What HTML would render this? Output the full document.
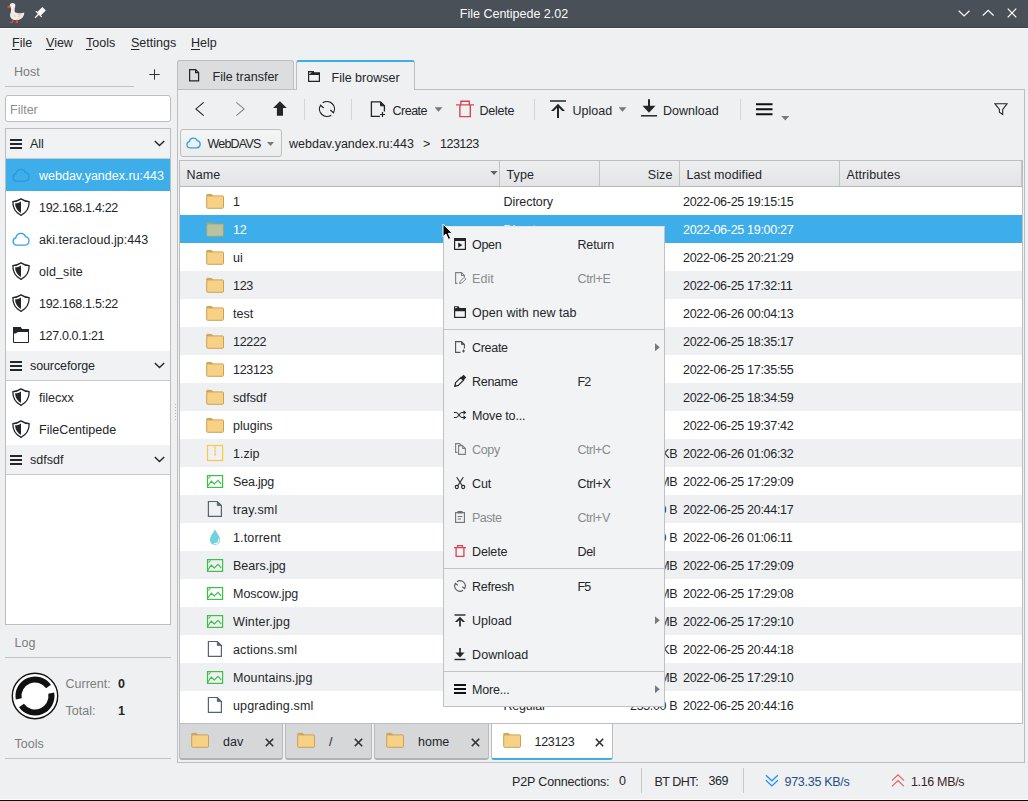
<!DOCTYPE html>
<html><head><meta charset="utf-8"><title>File Centipede 2.02</title>
<style>
*{box-sizing:border-box;margin:0;padding:0}
html,body{width:1028px;height:801px;overflow:hidden}
body{position:relative;background:#eff0f1;color:#232629;font-family:"Liberation Sans","DejaVu Sans",sans-serif;font-size:12.5px;line-height:16px;cursor:default}
div,span,i,svg.ic,u{position:absolute;display:block;white-space:nowrap}
u{position:static;display:inline;text-decoration:underline;text-underline-offset:2px}
.defs{position:absolute;width:0;height:0;overflow:hidden}
#titlebar{left:0;top:0;width:1028px;height:29px;background:#495058;border-bottom:1px solid #fbfcfc}
#titlebar::after{content:"";position:absolute;left:0;top:27px;width:1028px;height:1px;background:#3b454e}
#title{left:0;width:1028px;top:6px;text-align:center;color:#fcfcfc}
.mb{top:35px;height:17px}
.lbl{color:#7a7d80}
.hr{height:1px;background:#bfc1c2}
#filter{left:5px;top:95px;width:166px;height:27px;background:#fff;border:1px solid #bcbebf;border-radius:3px}
#filter span{left:4px;top:6px;color:#8b8e90}
#hostlist{left:5px;top:128px;width:166px;height:497px;background:#fff;border:1px solid #bcbebf;overflow:hidden}
.hh{left:0;width:164px;height:30px;background:#f1f2f3;border-bottom:1px solid #c9cacb}
.hh .hl{left:24px;top:7px}
.hi{left:0;width:164px;height:32px}
.hi .il{left:33px;top:9px}
.hi.sel{background:#3daee9;color:#fff}
.tab{height:30px;border:1px solid #bcbebf;border-bottom:none;border-radius:3px 3px 0 0}
#pane{left:177px;top:89px;width:848px;height:674px;border:1px solid #bcbebf;background:#eff0f1}
.tsep{top:99px;width:1px;height:21px;background:#d3d5d6}
.tbt{top:103px}
.dd{width:8px;height:4.5px;background:#77797c;clip-path:polygon(0 0,100% 0,50% 100%)}
#combo{left:180px;top:129px;width:102px;height:28px;border:1px solid #bcbebf;border-radius:3px;background:linear-gradient(#f4f5f5,#ebecec)}
#table{left:179px;top:160px;width:844px;height:564px;background:#fff;border:1px solid #bcbebf;overflow:hidden}
#thead{left:0;top:0;width:842px;height:26px;background:linear-gradient(#edeeef,#e3e4e5);border-bottom:1px solid #b7b8b8}
.th{top:0;height:25px;letter-spacing:.1px;padding:6px 6.5px 0 6.5px;border-right:1px solid #c2c4c5}
.th.r{text-align:right}
.sortarrow{left:310px;top:9.5px;width:8px;height:4.5px;background:#5f6265;clip-path:polygon(0 0,100% 0,50% 100%)}
.tr{left:0;width:842px;height:28px;background:#fff}
.tr.alt{background:#eff0f1}
.tr.sel{background:#3daee9;color:#fff}
.c{top:7px}
.c.n{left:53px}
.c.t{left:323.5px;letter-spacing:-.05px}
.c.s{left:420px;width:77.300px;text-align:right;letter-spacing:-.35px}
.c.d{left:503px;letter-spacing:-0.3px}
.btab{top:724px;height:36px;border:1px solid #b9bbbd;border-top:none;border-bottom:2px solid #b0b2b4;border-radius:0 0 3px 3px;background:#d6d7d9}
.btab span{top:9.5px}
.btab.act{background:#fff;border-bottom:2px solid #3daee9}
.x{width:9px;height:9px}
#status span{top:773.5px}
.ssep{top:768px;width:1px;height:25px;background:#c6c8c9}
#bottomline{left:0;top:800px;width:1028px;height:1px;background:#0c0c0c}
#whiteline{left:0;top:799px;width:1028px;height:1px;background:#fdfdfd}
#splitter{left:175px;top:404px;width:1px;height:16px;background:repeating-linear-gradient(#aeb0b2 0 1px,transparent 1px 3px)}
#menu{left:443px;top:226px;width:222px;height:481px;background:#f2f3f4;border:1px solid #bfc1c3;border-top-color:#e4e5e6;box-shadow:none}
.mi{left:0;width:220px;height:34px}
.mi .ml{left:28px;top:10px}
.mi .ms{left:133.5px;top:10px}
.mi.dis{color:#888b8e}
.marr{left:211px;top:13.300px;width:4.800px;height:8px;background:#77797c;clip-path:polygon(0 0,100% 50%,0 100%)}
.msep{left:0;width:220px;height:1px;background:#c3c5c6}
#cursor{position:absolute;left:441.5px;top:223px}

</style></head>
<body>

<svg class="defs">
<defs>
<symbol id="i-burger" viewBox="0 0 12 10"><path d="M0 1h12M0 5h12M0 9h12" stroke="#232629" stroke-width="2" fill="none"/></symbol>
<symbol id="i-chev" viewBox="0 0 11 7"><path d="M0.800 0.900L5.500 5.500L10.200 0.900" stroke="#232629" stroke-width="1.400" fill="none"/></symbol>
<symbol id="i-cloud" viewBox="0 0 18 18"><path d="M4.6 15.2A3.8 3.8 0 0 1 3.9 7.75A5 5 0 0 1 13.5 6.6A4.35 4.35 0 0 1 13.1 15.2Z" stroke="#2fa1e8" stroke-width="1.3" fill="none"/></symbol>
<symbol id="i-cloud-sel" viewBox="0 0 18 18"><path d="M4.6 15.2A3.8 3.8 0 0 1 3.9 7.75A5 5 0 0 1 13.5 6.6A4.35 4.35 0 0 1 13.1 15.2Z" stroke="#2b97e0" stroke-width="1.3" fill="none"/></symbol>
<symbol id="i-shield" viewBox="0 0 18 18"><path d="M9 0.900C11.500 2.700 14.400 3.500 17.200 3.600C17.200 10 14.500 14.800 9 17.300C3.500 14.800 0.800 10 0.800 3.600C3.600 3.500 6.500 2.700 9 0.900Z" fill="#fff" stroke="#232629" stroke-width="1.300" stroke-linejoin="round"/><path d="M9 3.400V15C5.400 12.800 3.300 9.600 3 5.500C5.200 5.300 7.300 4.500 9 3.400Z" fill="#232629"/></symbol>
<symbol id="i-ftp" viewBox="0 0 18 18"><path d="M1.500 1.500h7l1 2h7v13h-15z" stroke="#232629" stroke-width="1" fill="#fff"/><path d="M1 1h7.800l1 2H17v3H6.500c-1.500 0-2 1.500-3.500 1.500H1z" fill="#232629"/></symbol>
<symbol id="i-folder" viewBox="0 0 20 18"><path d="M1.700 4V3Q1.700 2.400 2.300 2.400H6.600L7.600 4Z" fill="#e8b75e" stroke="#caa258" stroke-width="1" stroke-linejoin="round"/><rect x="1.700" y="3.900" width="16.800" height="12.400" rx="1" fill="#f6d186" stroke="#caa258" stroke-width="1"/></symbol>
<symbol id="i-folder-sel" viewBox="0 0 20 18"><path d="M1.700 4V3Q1.700 2.400 2.300 2.400H6.600L7.600 4Z" fill="#a7b48e" stroke="#8fa585" stroke-width="1" stroke-linejoin="round"/><rect x="1.700" y="3.900" width="16.800" height="12.400" rx="1" fill="#bac3a0" stroke="#8fa585" stroke-width="1"/></symbol>
<symbol id="i-zip" viewBox="0 0 20 18"><rect x="2.500" y="1.500" width="15.100" height="15" fill="none" stroke="#f8ca45" stroke-width="1.200"/><path d="M10 1.500l.8.700-1.600 1.200 1.600 1.200-1.600 1.200 1.600 1.200-1.600 1.200 1.600 1.200-.8.700" fill="none" stroke="#f8ca45" stroke-width="1"/><rect x="9.200" y="10" width="1.600" height="1.600" fill="#f8ca45"/></symbol>
<symbol id="i-img" viewBox="0 0 20 18"><rect x="2.500" y="3.600" width="15.100" height="11.800" fill="none" stroke="#3cc04a" stroke-width="1.200"/><path d="M2.800 14l3.500-4.800 3 2.800 3.700-3.600 3.200 3.400" fill="none" stroke="#3cc04a" stroke-width="1.200"/><path d="M5.300 3.800a2.600 2.600 0 0 1-2.600 2.600" fill="none" stroke="#3cc04a" stroke-width="1"/></symbol>
<symbol id="i-doc" viewBox="0 0 20 18"><path d="M3.400 1.500H12.300L16.400 5.600V16.400H3.400Z" fill="none" stroke="#566375" stroke-width="1.200"/><path d="M12.300 1.500V5.600H16.400Z" fill="#566375" stroke="#566375" stroke-width=".8"/></symbol>
<symbol id="i-drop" viewBox="0 0 20 18"><path d="M10 1.300C12 5.500 15.100 8.500 15.100 12A5.100 5.100 0 0 1 4.900 12C4.900 8.500 8 5.500 10 1.300Z" fill="#6fd3dc"/><path d="M13.700 10.800a3.700 3.700 0 0 1-4.700 4.600" stroke="#fff" stroke-width="1.100" fill="none"/></symbol>
<symbol id="i-docs" viewBox="0 0 16 16"><path d="M3.600 3.600h6l3 3v8.300h-9z" fill="none" stroke="#232629" stroke-width="1.200"/><path d="M9.600 3.600v3h3" fill="none" stroke="#232629" stroke-width="1.200"/></symbol>
<symbol id="i-tabico" viewBox="0 0 16 16"><path d="M3.600 4.600h4.500l1 1.500h5.300v8.300h-10.800z" fill="none" stroke="#232629" stroke-width="1.200"/><path d="M3 4h5.400l1 1.500H15v2.500H3z" fill="#232629"/><path d="M4.200 7.200l2.800-1.800h-2.800z" fill="#fff"/></symbol>
<symbol id="m-open" viewBox="0 0 16 16"><rect x="2.600" y="2.600" width="10.800" height="10.800" fill="none" stroke="#232629" stroke-width="1.200"/><path d="M2 2h12v3h-12z" fill="#232629"/><path d="M6.200 6.400l4.200 2.700-4.200 2.700z" fill="#232629"/></symbol>
<symbol id="m-edit" viewBox="0 0 16 16"><path d="M9.500 2.600L12.400 5.500V7" fill="none" stroke="#7d8083" stroke-width="1.100"/><path d="M5.500 13.400H3.600V2.600H9.500V5.500H12.400" fill="none" stroke="#7d8083" stroke-width="1.100"/><path d="M7.600 13.600l.6-2.300 4-4 1.700 1.700-4 4z" fill="none" stroke="#7d8083" stroke-width="1"/></symbol>
<symbol id="m-tab" viewBox="0 0 16 16"><rect x="2.600" y="4.600" width="10.800" height="8.800" fill="none" stroke="#232629" stroke-width="1.200"/><path d="M2 2.200h4.500l1.500 2.300h6v2.700h-12z" fill="#232629"/><path d="M3.200 4.400l2.600-1.400h-2.600z" fill="#f2f3f4"/></symbol>
<symbol id="m-create" viewBox="0 0 16 16"><path d="M8.500 13.400H3.600V2.600H9.500L12.400 5.500V9.500" fill="none" stroke="#4d5258" stroke-width="1.100"/><path d="M9.500 2.600V5.500H12.400Z" fill="#4d5258" stroke="#4d5258" stroke-width=".8"/><path d="M11.500 10.500v3M10 12h3" stroke="#4d5258" stroke-width="1"/></symbol>
<symbol id="m-rename" viewBox="0 0 16 16"><path d="M2.700 13.300l.9-3.600 5.400-5.400 2.700 2.700-5.400 5.400z" fill="none" stroke="#232629" stroke-width="1.200" stroke-linejoin="round"/><path d="M8.300 5l3.300-3.300 2.700 2.700-3.300 3.300z" fill="#232629"/><path d="M2.700 13.300l.5-2 1.500 1.500z" fill="#232629"/></symbol>
<symbol id="m-move" viewBox="0 0 16 16"><path d="M2 5.500h2.200c2.200 0 3.400 5 5.600 5h3M2 10.500h2.200c2.200 0 3.400-5 5.600-5h3" fill="none" stroke="#232629" stroke-width="1.100"/><path d="M11.500 3.200l2.800 2.300-2.800 2.300zM11.500 8.200l2.800 2.300-2.800 2.300z" fill="#232629"/></symbol>
<symbol id="m-copy" viewBox="0 0 16 16"><path d="M5.500 11.400H3.600V2.600H7.500L9.400 4.500" fill="none" stroke="#7d8083" stroke-width="1.100"/><path d="M6.600 4.600H10.500L13.400 7.500V13.400H6.600Z" fill="none" stroke="#7d8083" stroke-width="1.100"/><path d="M10.500 4.600V7.500H13.400" fill="none" stroke="#7d8083" stroke-width="1"/></symbol>
<symbol id="m-cut" viewBox="0 0 16 16"><path d="M4.700 2.200l5.600 8.600M11.300 2.200l-5.600 8.600" stroke="#232629" stroke-width="1.100"/><circle cx="4.800" cy="12" r="1.600" fill="none" stroke="#232629" stroke-width="1.100"/><circle cx="11.200" cy="12" r="1.600" fill="none" stroke="#232629" stroke-width="1.100"/></symbol>
<symbol id="m-paste" viewBox="0 0 16 16"><rect x="3.600" y="3.600" width="8.800" height="9.800" fill="none" stroke="#6c7073" stroke-width="1.100"/><rect x="5.500" y="2" width="5" height="2.500" fill="#6c7073"/><path d="M5.700 7.500h4.600M5.700 10h3.300" stroke="#6c7073" stroke-width="1"/></symbol>
<symbol id="m-delete" viewBox="0 0 16 16"><path d="M2 4.600h12M5.600 4.600V2.600h4.800V4.600M4.100 4.600v8.700h7.800V4.600" fill="none" stroke="#da4453" stroke-width="1.300"/></symbol>
<symbol id="m-refresh" viewBox="0 0 16 16"><path d="M4.960 3.660A5.300 5.300 0 0 1 12.590 10.650L10.300 8.700" fill="none" stroke="#575b5f" stroke-width="1.150"/><path d="M11.040 12.340A5.300 5.300 0 0 1 3.410 5.350L5.700 7.300" fill="none" stroke="#575b5f" stroke-width="1.150"/></symbol>
<symbol id="m-upload" viewBox="0 0 16 16"><path d="M2.500 3h11" stroke="#232629" stroke-width="1.400"/><path d="M8 14.500v-8" stroke="#232629" stroke-width="1.700"/><path d="M8 4.800l5 5.200h-2.300l-2.700-2.700-2.700 2.700h-2.300z" fill="#232629"/></symbol>
<symbol id="m-download" viewBox="0 0 16 16"><path d="M2.500 13.500h11" stroke="#232629" stroke-width="1.400"/><path d="M8 2v6" stroke="#232629" stroke-width="1.700"/><path d="M3.500 6.500h9l-4.500 5z" fill="#232629"/></symbol>
<symbol id="m-more" viewBox="0 0 16 16"><path d="M2 4h12M2 8h12M2 12h12" stroke="#111" stroke-width="2" fill="none"/></symbol>
<symbol id="i-x" viewBox="0 0 9 9"><path d="M.8.800l7.400 7.400M8.200.800l-7.400 7.400" stroke="#2e3236" stroke-width="1.600"/></symbol>
</defs>
</svg>

<div id="titlebar">
<svg class="ic" style="left:0;top:0" width="50" height="27" viewBox="0 0 50 27"><path d="M10.900 6C10.900 9 11.600 11 10.300 13.500C9.300 17 11.500 20.200 16.500 20.200C21.200 20.200 24.300 17 24.300 12.600C21.500 13.700 17.500 13.300 15 12.200C14.200 10.500 14.900 8 14.900 6Z" fill="#f1ebe6"/><circle cx="12.600" cy="5.600" r="2.700" fill="#f5f0eb"/><path d="M10.200 5.200L7.400 6.200Q7.200 7.700 8.600 7.800L10.600 7.400Z" fill="#e8552d"/><path d="M13.200 19.800L12.300 22.400H10.400M17.200 19.800L17.500 22.400H15.600" fill="none" stroke="#e8552d" stroke-width="1.200"/><path d="M14 15.500l1.500 1M17.500 14.500l2.500.5M18 17l2-1M20.500 14l1.500 1.500" stroke="#c7b9b0" stroke-width=".8"/><g transform="translate(38.800,14) rotate(45)" fill="#fcfcfc" stroke="#fcfcfc"><rect x="-2.400" y="-7.500" width="4.800" height="7.500" stroke="none"/><path d="M-4.100 0H4.100" stroke-width="1.300"/><path d="M0 0V5.200" stroke-width="1.300"/></g></svg>
<span id="title">File Centipede 2.02</span>
<svg class="ic" style="left:956px;top:6px" width="64" height="14" viewBox="0 0 64 14"><path d="M2.700 4.700l5.400 5.200 5.400-5.200M26.800 9.500l5.400-5.200 5.400 5.200M51.700 2.600l8.600 8.800M60.300 2.600l-8.600 8.800" stroke="#fcfcfc" stroke-width="1.200" fill="none"/></svg>
</div>
<span class="mb" style="left:12px"><u>F</u>ile</span>
<span class="mb" style="left:46px"><u>V</u>iew</span>
<span class="mb" style="left:86px"><u>T</u>ools</span>
<span class="mb" style="left:131px"><u>S</u>ettings</span>
<span class="mb" style="left:191px"><u>H</u>elp</span>

<span class="lbl" style="left:14px;top:64px">Host</span>
<svg class="ic" style="left:149px;top:69px" width="11" height="11" viewBox="0 0 11 11"><path d="M5.500 0.300v10.400M0.300 5.500h10.400" stroke="#2f3337" stroke-width="1"/></svg>
<div class="hr" style="left:5px;top:86px;width:129px"></div>
<div id="filter"><span>Filter</span></div>

<div class="tab" style="left:177px;top:60px;width:117px;background:#dcddde"><svg class="ic" style="left:8px;top:5px" width="16" height="16"><use href="#i-docs"/></svg><span style="left:34.5px;top:7.5px">File transfer</span></div>
<div id="pane"></div>
<div class="tab" style="left:296px;top:60px;width:119px;height:30px;background:#eff0f1;border-top:2px solid #3daee9"><svg class="ic" style="left:8px;top:5px" width="16" height="16"><use href="#i-tabico"/></svg><span style="left:34.5px;top:7.5px">File browser</span></div>

<svg class="ic" style="left:194px;top:101px" width="12" height="16" viewBox="0 0 12 16"><path d="M9.700 1.400l-7.800 6.500 7.800 6.700" stroke="#232629" stroke-width="1.100" fill="none"/></svg>
<svg class="ic" style="left:234px;top:101px" width="12" height="16" viewBox="0 0 12 16"><path d="M2.300 1.400l7.800 6.500-7.800 6.700" stroke="#85888a" stroke-width="1.100" fill="none"/></svg>
<svg class="ic" style="left:272px;top:101px" width="16" height="15" viewBox="0 0 16 15"><path d="M7.900 0.200l6.900 6.800h-3.800v7.800h-6.100v-7.800h-3.800z" fill="#232629"/></svg>
<div class="tsep" style="left:304px"></div>
<svg class="ic" style="left:318px;top:100px" width="18" height="18" viewBox="0 0 18 18"><path d="M4.700 2.860A7.500 7.500 0 0 1 15.500 12.750L12.300 10" fill="none" stroke="#232629" stroke-width="1.200"/><path d="M13.300 15.140A7.500 7.500 0 0 1 2.500 5.250L5.700 8" fill="none" stroke="#232629" stroke-width="1.200"/></svg>
<div class="tsep" style="left:351px"></div>
<svg class="ic" style="left:370px;top:100px" width="16" height="18" viewBox="0 0 16 18"><path d="M10 16.300H1.400V1.900H10.500L14.400 5.800V11.500" fill="none" stroke="#232629" stroke-width="1.300"/><path d="M10.500 1.900L14.400 5.800H10.500Z" fill="#232629" stroke="#232629" stroke-width="1"/><path d="M12.500 12v5M10 14.500h5" stroke="#232629" stroke-width="1.200"/></svg>
<span class="tbt" style="left:392.500px;letter-spacing:-0.500px">Create</span>
<i class="dd" style="left:434.500px;top:107.300px"></i>
<svg class="ic" style="left:456px;top:100px" width="18" height="18" viewBox="0 0 18 18"><path d="M0 4.900H18M4.900 4.900V1.300H13.300V4.900M3.900 4.900V16.600H14.300V4.900" fill="none" stroke="#da4453" stroke-width="1.400"/></svg>
<span class="tbt" style="left:479.500px;letter-spacing:-0.250px">Delete</span>
<div class="tsep" style="left:534px"></div>
<svg class="ic" style="left:550px;top:100px" width="16" height="18" viewBox="0 0 16 18"><path d="M0 1h16" stroke="#232629" stroke-width="1.500"/><path d="M8 18v-12" stroke="#232629" stroke-width="2"/><path d="M8 3.700l7 7.200h-2.800l-4.200-4.200-4.200 4.200h-2.800z" fill="#232629"/></svg>
<span class="tbt" style="left:572.500px">Upload</span>
<i class="dd" style="left:618.500px;top:107.300px"></i>
<svg class="ic" style="left:641px;top:99px" width="16" height="18" viewBox="0 0 16 18"><path d="M0 16.800h16" stroke="#232629" stroke-width="1.500"/><path d="M8 0.300v8" stroke="#232629" stroke-width="2"/><path d="M1.500 6.700h13l-6.500 7z" fill="#232629"/></svg>
<span class="tbt" style="left:663px">Download</span>
<div class="tsep" style="left:740px"></div>
<svg class="ic" style="left:756px;top:103px" width="17" height="13" viewBox="0 0 17 13"><path d="M0 1.200h16.500M0 6.200h16.500M0 11.200h16.500" stroke="#111" stroke-width="2"/></svg>
<i class="dd" style="left:781.300px;top:116px"></i>
<svg class="ic" style="left:994px;top:103px" width="14" height="13" viewBox="0 0 14 13"><path d="M1 0.800h12l-4.300 5.700v5l-3.300-2.200v-2.800z" fill="none" stroke="#232629" stroke-width="1.100"/></svg>

<div id="combo"><svg class="ic" style="left:5px;top:6px" width="15" height="13" viewBox="0 0 18 15.6"><path d="M4.600 14.200A3.800 3.800 0 0 1 3.900 6.750A5 5 0 0 1 13.500 5.600A4.350 4.350 0 0 1 13.100 14.200Z" stroke="#2fa1e8" stroke-width="1.500" fill="none"/></svg><span style="left:26.500px;top:6px;letter-spacing:-0.800px">WebDAVS</span><i class="dd" style="left:85.500px;top:11.500px"></i></div>
<span style="left:289px;top:136px">webdav.yandex.ru:443</span>
<span style="left:423px;top:136px">&gt;</span>
<span style="left:440px;top:136px;letter-spacing:-0.500px">123123</span>

<div id="hostlist">
<div class="hh" style="top:0px"><svg class="ic" style="left:4px;top:10px" width="12" height="10" ><use href="#i-burger"/></svg><span class="hl">All</span><svg class="ic" style="left:147.9px;top:10.8px" width="11" height="7" ><use href="#i-chev"/></svg></div>
<div class="hi sel" style="top:30px"><svg class="ic" style="left:6px;top:7px" width="18" height="18" ><use href="#i-cloud-sel"/></svg><span class="il">webdav.yandex.ru:443</span></div>
<div class="hi" style="top:62px"><svg class="ic" style="left:6px;top:7px" width="18" height="18" ><use href="#i-shield"/></svg><span class="il" style="letter-spacing:-0.32px">192.168.1.4:22</span></div>
<div class="hi" style="top:94px"><svg class="ic" style="left:6px;top:7px" width="18" height="18" ><use href="#i-cloud"/></svg><span class="il" style="letter-spacing:0.04px">aki.teracloud.jp:443</span></div>
<div class="hi" style="top:126px"><svg class="ic" style="left:6px;top:7px" width="18" height="18" ><use href="#i-shield"/></svg><span class="il" style="letter-spacing:0.1px">old_site</span></div>
<div class="hi" style="top:158px"><svg class="ic" style="left:6px;top:7px" width="18" height="18" ><use href="#i-shield"/></svg><span class="il" style="letter-spacing:-0.32px">192.168.1.5:22</span></div>
<div class="hi" style="top:190px"><svg class="ic" style="left:6px;top:7px" width="18" height="18" ><use href="#i-ftp"/></svg><span class="il" style="letter-spacing:-0.36px">127.0.0.1:21</span></div>
<div class="hh" style="top:222px"><svg class="ic" style="left:4px;top:10px" width="12" height="10" ><use href="#i-burger"/></svg><span class="hl" style="letter-spacing:-0.1px">sourceforge</span><svg class="ic" style="left:147.9px;top:10.8px" width="11" height="7" ><use href="#i-chev"/></svg></div>
<div class="hi" style="top:252px"><svg class="ic" style="left:6px;top:7px" width="18" height="18" ><use href="#i-shield"/></svg><span class="il">filecxx</span></div>
<div class="hi" style="top:284px"><svg class="ic" style="left:6px;top:7px" width="18" height="18" ><use href="#i-shield"/></svg><span class="il">FileCentipede</span></div>
<div class="hh" style="top:316px"><svg class="ic" style="left:4px;top:10px" width="12" height="10" ><use href="#i-burger"/></svg><span class="hl">sdfsdf</span><svg class="ic" style="left:147.9px;top:10.8px" width="11" height="7" ><use href="#i-chev"/></svg></div>
</div>

<div id="table">
<div id="thead"><span class="th" style="left:0;width:320px">Name</span><span class="th" style="left:320px;width:100px">Type</span><span class="th r" style="left:420px;width:80px">Size</span><span class="th" style="left:500px;width:160px">Last modified</span><span class="th" style="left:660px;width:182px">Attributes</span><i class="sortarrow"></i></div>
<div class="tr" style="top:26px"><svg class="ic" style="left:25px;top:5px" width="20" height="18" ><use href="#i-folder"/></svg><span class="c n" style="letter-spacing:-.3px">1</span><span class="c t">Directory</span><span class="c s"></span><span class="c d">2022-06-25 19:15:15</span></div>
<div class="tr alt sel" style="top:54px"><svg class="ic" style="left:25px;top:5px" width="20" height="18" ><use href="#i-folder-sel"/></svg><span class="c n" style="letter-spacing:-.3px">12</span><span class="c t">Directory</span><span class="c s"></span><span class="c d">2022-06-25 19:00:27</span></div>
<div class="tr" style="top:82px"><svg class="ic" style="left:25px;top:5px" width="20" height="18" ><use href="#i-folder"/></svg><span class="c n">ui</span><span class="c t">Directory</span><span class="c s"></span><span class="c d">2022-06-25 20:21:29</span></div>
<div class="tr alt" style="top:110px"><svg class="ic" style="left:25px;top:5px" width="20" height="18" ><use href="#i-folder"/></svg><span class="c n" style="letter-spacing:-.3px">123</span><span class="c t">Directory</span><span class="c s"></span><span class="c d">2022-06-25 17:32:11</span></div>
<div class="tr" style="top:138px"><svg class="ic" style="left:25px;top:5px" width="20" height="18" ><use href="#i-folder"/></svg><span class="c n">test</span><span class="c t">Directory</span><span class="c s"></span><span class="c d">2022-06-26 00:04:13</span></div>
<div class="tr alt" style="top:166px"><svg class="ic" style="left:25px;top:5px" width="20" height="18" ><use href="#i-folder"/></svg><span class="c n" style="letter-spacing:-.3px">12222</span><span class="c t">Directory</span><span class="c s"></span><span class="c d">2022-06-25 18:35:17</span></div>
<div class="tr" style="top:194px"><svg class="ic" style="left:25px;top:5px" width="20" height="18" ><use href="#i-folder"/></svg><span class="c n" style="letter-spacing:-.3px">123123</span><span class="c t">Directory</span><span class="c s"></span><span class="c d">2022-06-25 17:35:55</span></div>
<div class="tr alt" style="top:222px"><svg class="ic" style="left:25px;top:5px" width="20" height="18" ><use href="#i-folder"/></svg><span class="c n">sdfsdf</span><span class="c t">Directory</span><span class="c s"></span><span class="c d">2022-06-25 18:34:59</span></div>
<div class="tr" style="top:250px"><svg class="ic" style="left:25px;top:5px" width="20" height="18" ><use href="#i-folder"/></svg><span class="c n">plugins</span><span class="c t">Directory</span><span class="c s"></span><span class="c d">2022-06-25 19:37:42</span></div>
<div class="tr alt" style="top:278px"><svg class="ic" style="left:25px;top:5px" width="20" height="18" ><use href="#i-zip"/></svg><span class="c n">1.zip</span><span class="c t" style="letter-spacing:-0.2px">Regular</span><span class="c s">19.21 KB</span><span class="c d">2022-06-26 01:06:32</span></div>
<div class="tr" style="top:306px"><svg class="ic" style="left:25px;top:5px" width="20" height="18" ><use href="#i-img"/></svg><span class="c n" style="letter-spacing:-0.2px">Sea.jpg</span><span class="c t" style="letter-spacing:-0.2px">Regular</span><span class="c s">1.21 MB</span><span class="c d">2022-06-25 17:29:09</span></div>
<div class="tr alt" style="top:334px"><svg class="ic" style="left:25px;top:5px" width="20" height="18" ><use href="#i-doc"/></svg><span class="c n" style="letter-spacing:0.2px">tray.sml</span><span class="c t" style="letter-spacing:-0.2px">Regular</span><span class="c s">780 B</span><span class="c d">2022-06-25 20:44:17</span></div>
<div class="tr" style="top:362px"><svg class="ic" style="left:25px;top:5px" width="20" height="18" ><use href="#i-drop"/></svg><span class="c n" style="letter-spacing:0.15px">1.torrent</span><span class="c t" style="letter-spacing:-0.2px">Regular</span><span class="c s">400 B</span><span class="c d">2022-06-26 01:06:11</span></div>
<div class="tr alt" style="top:390px"><svg class="ic" style="left:25px;top:5px" width="20" height="18" ><use href="#i-img"/></svg><span class="c n">Bears.jpg</span><span class="c t" style="letter-spacing:-0.2px">Regular</span><span class="c s">1.71 MB</span><span class="c d">2022-06-25 17:29:09</span></div>
<div class="tr" style="top:418px"><svg class="ic" style="left:25px;top:5px" width="20" height="18" ><use href="#i-img"/></svg><span class="c n">Moscow.jpg</span><span class="c t" style="letter-spacing:-0.2px">Regular</span><span class="c s">1.38 MB</span><span class="c d">2022-06-25 17:29:08</span></div>
<div class="tr alt" style="top:446px"><svg class="ic" style="left:25px;top:5px" width="20" height="18" ><use href="#i-img"/></svg><span class="c n" style="letter-spacing:0.14px">Winter.jpg</span><span class="c t" style="letter-spacing:-0.2px">Regular</span><span class="c s">2.07 MB</span><span class="c d">2022-06-25 17:29:10</span></div>
<div class="tr" style="top:474px"><svg class="ic" style="left:25px;top:5px" width="20" height="18" ><use href="#i-doc"/></svg><span class="c n" style="letter-spacing:0.14px">actions.sml</span><span class="c t" style="letter-spacing:-0.2px">Regular</span><span class="c s">8.43 KB</span><span class="c d">2022-06-25 20:44:18</span></div>
<div class="tr alt" style="top:502px"><svg class="ic" style="left:25px;top:5px" width="20" height="18" ><use href="#i-img"/></svg><span class="c n" style="letter-spacing:0.13px">Mountains.jpg</span><span class="c t" style="letter-spacing:-0.2px">Regular</span><span class="c s">1.62 MB</span><span class="c d">2022-06-25 17:29:10</span></div>
<div class="tr" style="top:530px"><svg class="ic" style="left:25px;top:5px" width="20" height="18" ><use href="#i-doc"/></svg><span class="c n" style="letter-spacing:0.15px">upgrading.sml</span><span class="c t" style="letter-spacing:-0.2px">Regular</span><span class="c s">255.00 B</span><span class="c d">2022-06-25 20:44:16</span></div>
</div>

<span class="lbl" style="left:14.500px;top:635px">Log</span>
<div class="hr" style="left:5px;top:657px;width:166px"></div>
<svg class="ic" style="left:11px;top:672px" width="48" height="48" viewBox="0 0 48 48"><circle cx="24" cy="24" r="22.700" fill="#fff" stroke="#111" stroke-width="1.400"/><path d="M7.750 26.870A16.500 16.500 0 0 1 37.520 14.540" fill="none" stroke="#111" stroke-width="6"/><path d="M40.250 21.130A16.500 16.500 0 0 1 10.480 33.460" fill="none" stroke="#111" stroke-width="6"/></svg>
<span class="lbl" style="left:65.500px;top:676px">Current:</span><span style="left:118px;top:676px;font-weight:bold">0</span>
<span class="lbl" style="left:65.500px;top:703px">Total:</span><span style="left:118px;top:703px;font-weight:bold">1</span>
<span class="lbl" style="left:14.500px;top:736px">Tools</span>
<div class="hr" style="left:5px;top:758px;width:166px"></div>
<div id="splitter"></div>

<div class="btab" style="left:179px;width:104px"><svg class="ic" style="left:10px;top:7px" width="20" height="18"><use href="#i-folder"/></svg><span style="left:43px">dav</span><svg class="ic x" style="left:85px;top:13.500px"><use href="#i-x"/></svg></div>
<div class="btab" style="left:285px;width:87px"><svg class="ic" style="left:10px;top:7px" width="20" height="18"><use href="#i-folder"/></svg><span style="left:43px">/</span><svg class="ic x" style="left:68px;top:13.500px"><use href="#i-x"/></svg></div>
<div class="btab" style="left:374px;width:115px"><svg class="ic" style="left:10px;top:7px" width="20" height="18"><use href="#i-folder"/></svg><span style="left:43px">home</span><svg class="ic x" style="left:96px;top:13.500px"><use href="#i-x"/></svg></div>
<div class="btab act" style="left:491px;width:122px"><svg class="ic" style="left:10px;top:7px" width="20" height="18"><use href="#i-folder"/></svg><span style="left:42.500px;letter-spacing:-0.300px">123123</span><svg class="ic x" style="left:103px;top:13.500px"><use href="#i-x"/></svg></div>

<div id="status">
<span style="left:512px;letter-spacing:-0.150px">P2P Connections:</span><span style="left:619px;top:772.500px">0</span>
<div class="ssep" style="left:641px"></div>
<span style="left:654.500px;letter-spacing:-0.480px">BT DHT:</span><span style="left:708.500px;top:772.500px;letter-spacing:-0.500px">369</span>
<div class="ssep" style="left:743px"></div>
<svg class="ic" style="left:765px;top:774px" width="14" height="13" viewBox="0 0 14 13"><path d="M.9 1.200l6 5.600 6-5.600M.9 6.300l6 5.600 6-5.600" fill="none" stroke="#1e90ff" stroke-width="1.300"/></svg>
<span style="left:784.500px;color:#1f4e8c;letter-spacing:-0.280px">973.35 KB/s</span>
<svg class="ic" style="left:891px;top:773.500px" width="14" height="13" viewBox="0 0 14 13"><path d="M1 6.600l6-5.800 6 5.800M1 12.300l6-5.800 6 5.800" fill="none" stroke="#e85a5f" stroke-width="1.100"/></svg>
<span style="left:911px;color:#3d2328;letter-spacing:-0.340px">1.16 MB/s</span>
</div>
<div id="whiteline"></div>
<div id="bottomline"></div>

<div id="menu">
<div class="mi" style="top:0px"><svg class="ic" style="left:8px;top:9px" width="16" height="16" ><use href="#m-open"/></svg><span class="ml" style="letter-spacing:-0.295px">Open</span><span class="ms" style="letter-spacing:-0.17px">Return</span></div>
<div class="mi dis" style="top:34px"><svg class="ic" style="left:8px;top:9px" width="16" height="16" ><use href="#m-edit"/></svg><span class="ml" style="letter-spacing:0.08px">Edit</span><span class="ms" style="letter-spacing:-0.37px">Ctrl+E</span></div>
<div class="mi" style="top:68px"><svg class="ic" style="left:8px;top:9px" width="16" height="16" ><use href="#m-tab"/></svg><span class="ml" style="letter-spacing:0.065px">Open with new tab</span></div>
<div class="msep" style="top:102px"></div>
<div class="mi" style="top:103px"><svg class="ic" style="left:8px;top:9px" width="16" height="16" ><use href="#m-create"/></svg><span class="ml" style="letter-spacing:-0.3px">Create</span><i class="marr"></i></div>
<div class="mi" style="top:137px"><svg class="ic" style="left:8px;top:9px" width="16" height="16" ><use href="#m-rename"/></svg><span class="ml" style="letter-spacing:-0.27px">Rename</span><span class="ms" style="letter-spacing:-0.8px">F2</span></div>
<div class="mi" style="top:171px"><svg class="ic" style="left:8px;top:9px" width="16" height="16" ><use href="#m-move"/></svg><span class="ml" style="letter-spacing:-0.15px">Move to...</span></div>
<div class="mi dis" style="top:205px"><svg class="ic" style="left:8px;top:9px" width="16" height="16" ><use href="#m-copy"/></svg><span class="ml" style="letter-spacing:-0.32px">Copy</span><span class="ms" style="letter-spacing:-0.48px">Ctrl+C</span></div>
<div class="mi" style="top:239px"><svg class="ic" style="left:8px;top:9px" width="16" height="16" ><use href="#m-cut"/></svg><span class="ml" style="letter-spacing:-0.15px">Cut</span><span class="ms" style="letter-spacing:-0.35px">Ctrl+X</span></div>
<div class="mi dis" style="top:273px"><svg class="ic" style="left:8px;top:9px" width="16" height="16" ><use href="#m-paste"/></svg><span class="ml" style="letter-spacing:-0.52px">Paste</span><span class="ms" style="letter-spacing:-0.47px">Ctrl+V</span></div>
<div class="mi" style="top:307px"><svg class="ic" style="left:8px;top:9px" width="16" height="16" ><use href="#m-delete"/></svg><span class="ml" style="letter-spacing:-0.13px">Delete</span><span class="ms" style="letter-spacing:-0.33px">Del</span></div>
<div class="msep" style="top:341px"></div>
<div class="mi" style="top:342px"><svg class="ic" style="left:8px;top:9px" width="16" height="16" ><use href="#m-refresh"/></svg><span class="ml" style="letter-spacing:-0.27px">Refresh</span><span class="ms" style="letter-spacing:-0.8px">F5</span></div>
<div class="mi" style="top:376px"><svg class="ic" style="left:8px;top:9px" width="16" height="16" ><use href="#m-upload"/></svg><span class="ml" style="letter-spacing:0.03px">Upload</span><i class="marr"></i></div>
<div class="mi" style="top:410px"><svg class="ic" style="left:8px;top:9px" width="16" height="16" ><use href="#m-download"/></svg><span class="ml" style="letter-spacing:0.1px">Download</span></div>
<div class="msep" style="top:444px"></div>
<div class="mi" style="top:445px"><svg class="ic" style="left:8px;top:9px" width="16" height="16" ><use href="#m-more"/></svg><span class="ml" style="letter-spacing:-0.2px">More...</span><i class="marr"></i></div>
</div>

<svg id="cursor" width="12" height="18" viewBox="0 0 12 18"><path d="M1 1 L1 13.700 L3.900 11 L6.400 16.400 L8.700 15.400 L6.300 10.300 L10.300 10.300 Z" fill="#000" stroke="#fff" stroke-width="1" stroke-linejoin="round"/></svg>

</body></html>
